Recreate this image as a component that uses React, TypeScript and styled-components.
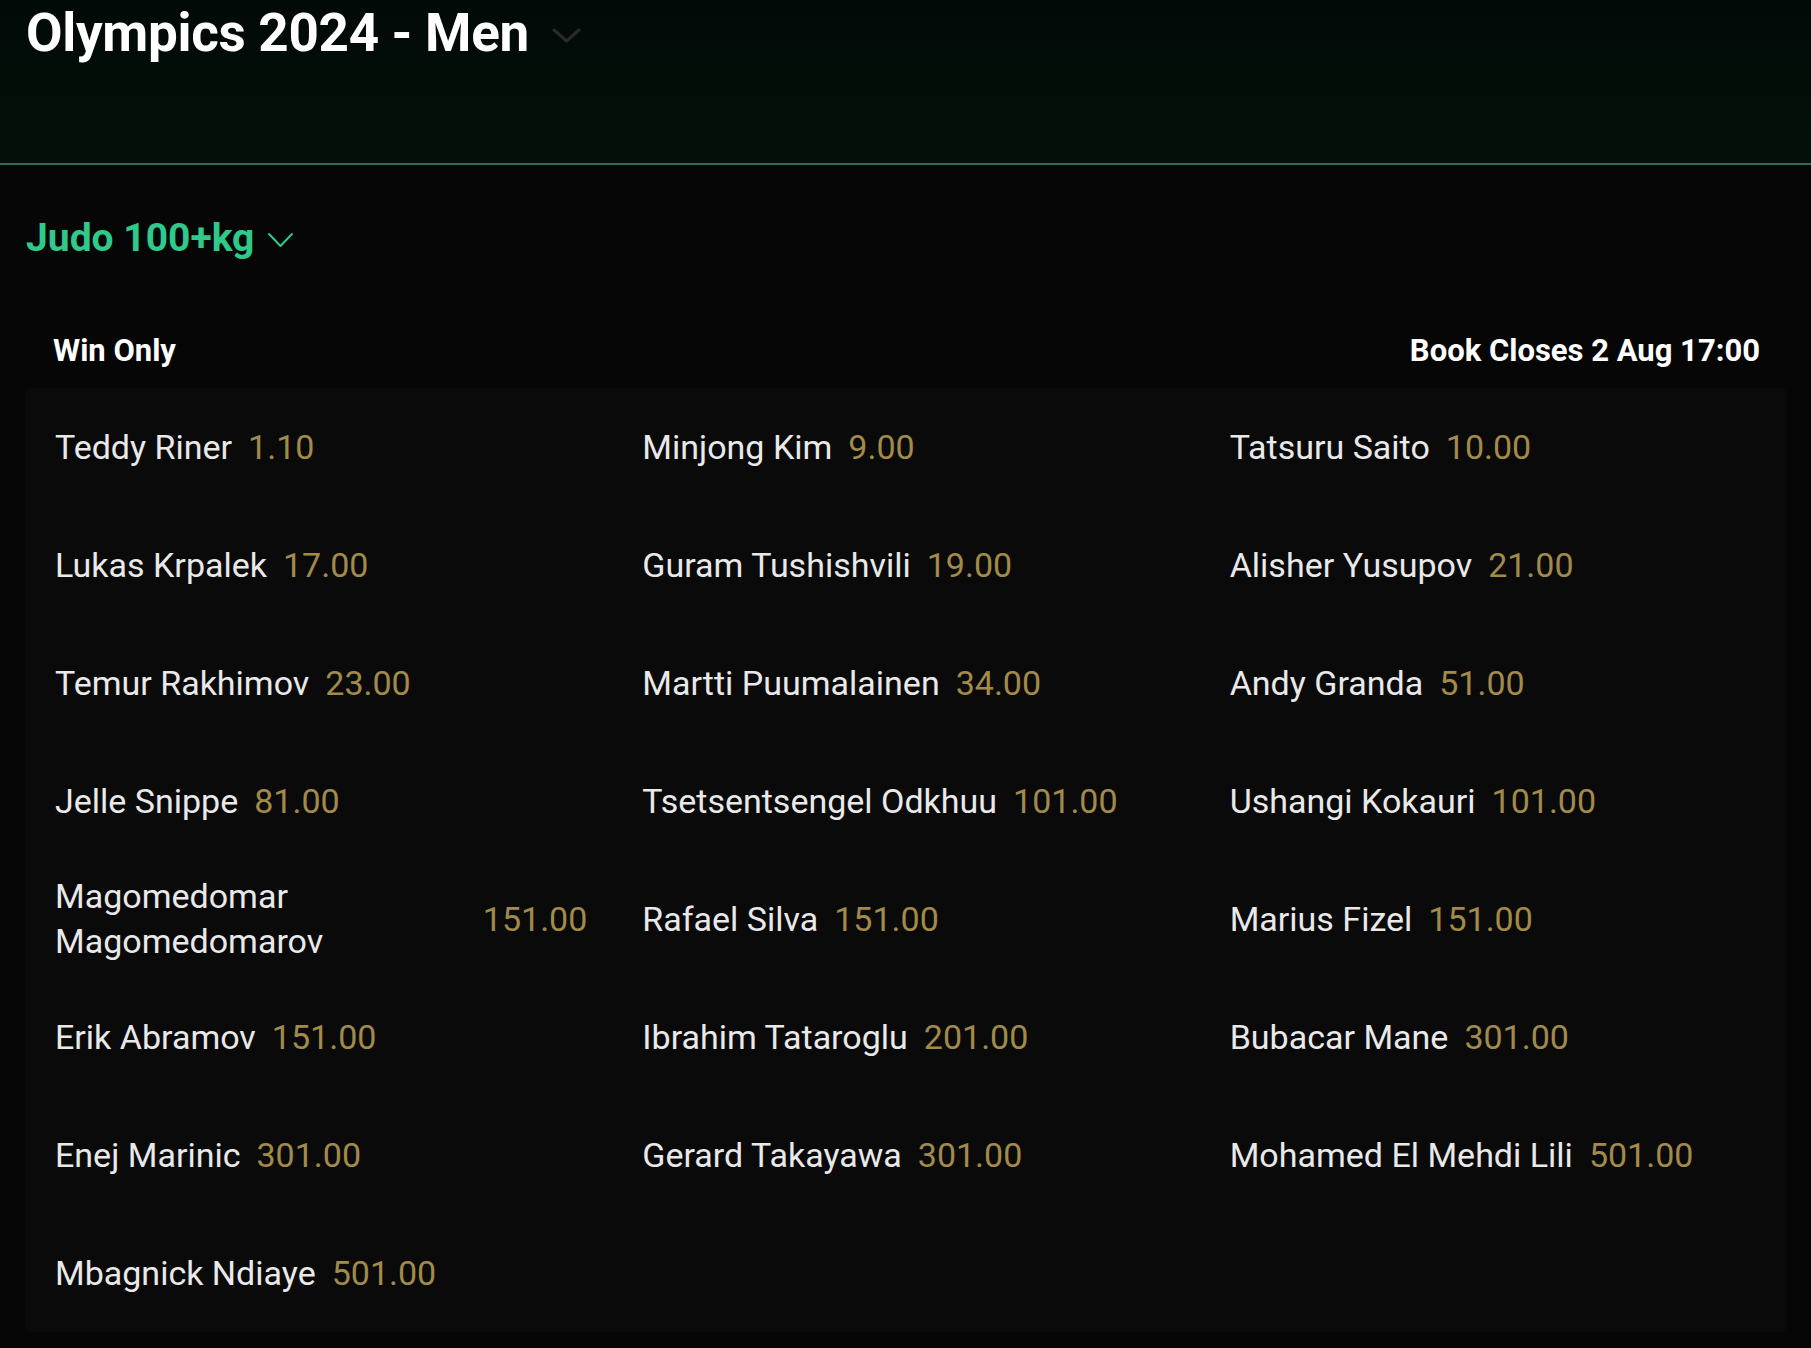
import React from 'react';
import styled, { createGlobalStyle } from 'styled-components';

const GlobalStyle = createGlobalStyle`
  html, body {
    margin: 0;
    padding: 0;
    background: #060606;
    font-family: Roboto, "Liberation Sans", sans-serif;
  }
`;

const Page = styled.div`
  min-height: 1348px;
  background: #060606;
`;

const TopBar = styled.header`
  height: 156px;
  padding: 7px 26px 0;
  background: linear-gradient(180deg, #020a07 0%, #031009 100%);
  border-bottom: 2px solid #2f6a50;
  display: flex;
  align-items: flex-start;
  gap: 22px;
`;

const Title = styled.h1`
  margin: 0;
  font-size: 53px;
  line-height: 53px;
  font-weight: 700;
  color: #ffffff;
  letter-spacing: -0.3px;
`;

const TitleToggle = styled.span`
  display: flex;
  margin-top: 20px;
`;

const Body = styled.main`
  padding: 54px 24px 0 25px;
`;

const SportTitle = styled.h2`
  margin: 0 0 0 1px;
  display: flex;
  align-items: center;
  gap: 13px;
  font-size: 39px;
  line-height: 39px;
  font-weight: 700;
  color: #2ec98b;

  svg {
    margin-top: 2px;
  }
`;

const MarketHeader = styled.div`
  display: flex;
  justify-content: space-between;
  padding: 77px 27px 0 28px;
  height: 53px;
  font-size: 31px;
  line-height: 31px;
  font-weight: 700;
  color: #ffffff;
`;

const Card = styled.section`
  background: #0a0a0a;
  border-radius: 6px;
  display: grid;
  grid-template-columns: repeat(3, 1fr);
`;

const Cell = styled.div`
  height: 118px;
  padding: 0 25px 0 30px;
  display: flex;
  align-items: center;
  gap: 16px;
`;

const Name = styled.span`
  font-size: 34px;
  line-height: 45px;
  color: #e9e9e9;
`;

const Odds = styled.span`
  flex-shrink: 0;
  font-size: 34px;
  line-height: 45px;
  color: #a28a4b;
`;

const Chevron = ({ color, w, h, stroke }: { color: string; w: number; h: number; stroke: number }) => (
  <svg width={w} height={h} viewBox={`0 0 ${w} ${h}`} fill="none">
    <path
      d={`M${stroke} ${stroke}L${w / 2} ${h - stroke}L${w - stroke} ${stroke}`}
      stroke={color}
      strokeWidth={stroke}
      strokeLinecap="round"
      strokeLinejoin="round"
    />
  </svg>
);

const runners: [string, string][] = [
  ['Teddy Riner', '1.10'],
  ['Minjong Kim', '9.00'],
  ['Tatsuru Saito', '10.00'],
  ['Lukas Krpalek', '17.00'],
  ['Guram Tushishvili', '19.00'],
  ['Alisher Yusupov', '21.00'],
  ['Temur Rakhimov', '23.00'],
  ['Martti Puumalainen', '34.00'],
  ['Andy Granda', '51.00'],
  ['Jelle Snippe', '81.00'],
  ['Tsetsentsengel Odkhuu', '101.00'],
  ['Ushangi Kokauri', '101.00'],
  ['Magomedomar Magomedomarov', '151.00'],
  ['Rafael Silva', '151.00'],
  ['Marius Fizel', '151.00'],
  ['Erik Abramov', '151.00'],
  ['Ibrahim Tataroglu', '201.00'],
  ['Bubacar Mane', '301.00'],
  ['Enej Marinic', '301.00'],
  ['Gerard Takayawa', '301.00'],
  ['Mohamed El Mehdi Lili', '501.00'],
  ['Mbagnick Ndiaye', '501.00'],
];

export default function App() {
  return (
    <Page>
      <GlobalStyle />
      <TopBar>
        <Title>Olympics 2024 - Men</Title>
        <TitleToggle>
          <Chevron color="#2a2a2a" w={31} h={17} stroke={3} />
        </TitleToggle>
      </TopBar>
      <Body>
        <SportTitle>
          Judo 100+kg
          <Chevron color="#2ec98b" w={27} h={16} stroke={2} />
        </SportTitle>
        <MarketHeader>
          <span>Win Only</span>
          <span>Book Closes 2 Aug 17:00</span>
        </MarketHeader>
        <Card>
          {runners.map(([name, odds]) => (
            <Cell key={name}>
              <Name>{name}</Name>
              <Odds>{odds}</Odds>
            </Cell>
          ))}
        </Card>
      </Body>
    </Page>
  );
}
